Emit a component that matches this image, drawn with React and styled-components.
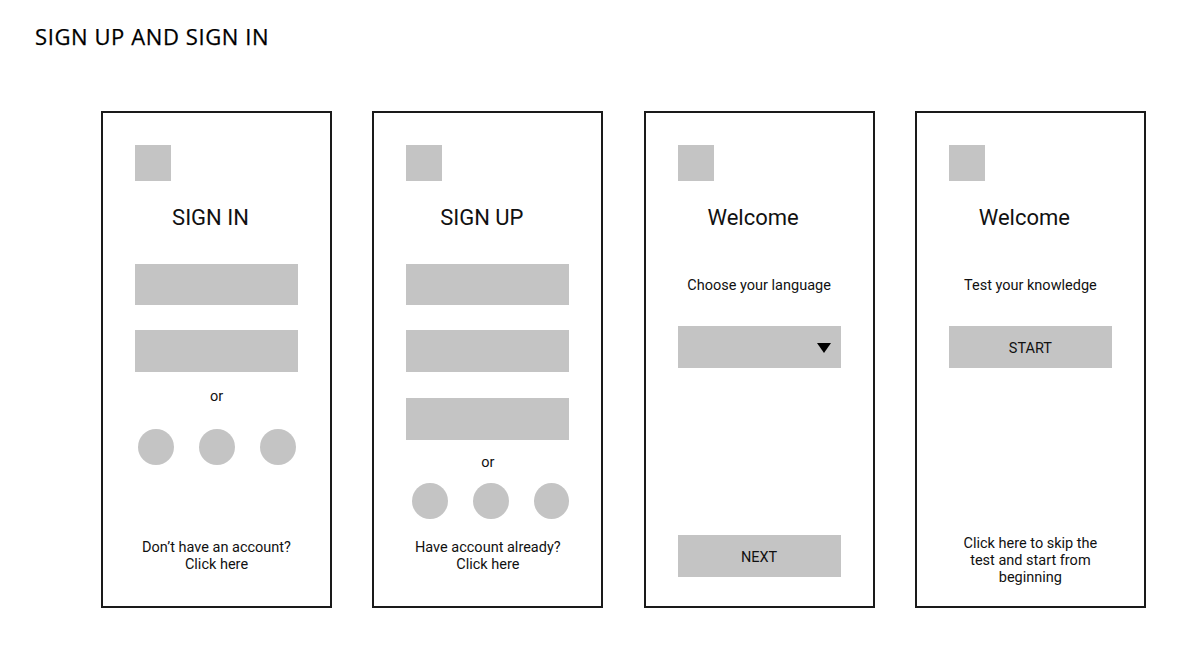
import styled, { createGlobalStyle } from "styled-components";

const GlobalStyle = createGlobalStyle`
  body {
    margin: 0;
    background: #ffffff;
    font-family: "Roboto", "Liberation Sans", sans-serif;
    color: #111111;
  }
`;

const Page = styled.div`
  width: 1200px;
  height: 656px;
  padding: 21px 0 0 35px;
  box-sizing: border-box;
`;

const Title = styled.h1`
  margin: 0;
  font-family: "Open Sans", "Liberation Sans", sans-serif;
  font-weight: 400;
  font-size: 22px;
  line-height: 30px;
  letter-spacing: 0.6px;
  color: #000;
  -webkit-text-stroke: 0.25px #000;
`;

const Board = styled.div`
  display: flex;
  gap: 40.3px;
  margin: 60px 0 0 66px;
`;

const Screen = styled.section`
  width: 231px;
  height: 497px;
  box-sizing: border-box;
  border: 2px solid #1a1a1a;
  display: flex;
  flex-direction: column;
  padding: 32px 32px ${(p) => p.$bottom || 33}px;
`;

const Logo = styled.div`
  width: 36px;
  height: 36px;
  background: #c4c4c4;
`;

const Heading = styled.h2`
  margin: 25px 12px 0 0;
  font-weight: 400;
  font-size: 22px;
  line-height: 24px;
  text-align: center;
  color: #111;
`;

const Field = styled.div`
  height: ${(p) => p.$h || 41}px;
  margin-top: ${(p) => p.$top}px;
  background: #c4c4c4;
  position: relative;
`;

const Caption = styled.p`
  margin: ${(p) => p.$top}px 0 0;
  font-size: 14.5px;
  line-height: 17px;
  text-align: center;
  color: #111;
`;

const Socials = styled.div`
  display: flex;
  gap: 25px;
  padding-left: ${(p) => p.$offset}px;
  margin-top: ${(p) => p.$top}px;
`;

const Circle = styled.div`
  width: 36px;
  height: 36px;
  border-radius: 50%;
  background: #c4c4c4;
`;

const Footer = styled.p`
  margin: auto 0 0;
  font-size: 14.5px;
  line-height: 17px;
  text-align: center;
  color: #111;
`;

const Button = styled.div`
  height: 42px;
  margin-top: ${(p) => (p.$top === undefined ? 0 : `${p.$top}px`)};
  background: #c4c4c4;
  display: flex;
  align-items: center;
  justify-content: center;
  padding-top: 2px;
  box-sizing: border-box;
  font-size: 14.5px;
  color: #111;
`;

const BottomButton = styled(Button)`
  margin-top: auto;
`;

const Caret = styled.svg`
  position: absolute;
  right: 10px;
  top: 17px;
`;

function SocialRow({ top, offset }) {
  return (
    <Socials $top={top} $offset={offset}>
      <Circle />
      <Circle />
      <Circle />
    </Socials>
  );
}

export default function App() {
  return (
    <>
      <GlobalStyle />
      <Page>
        <Title>SIGN UP AND SIGN IN</Title>
        <Board>
          <Screen>
            <Logo />
            <Heading>SIGN IN</Heading>
            <Field $top={34} />
            <Field $top={25} $h={42} />
            <Caption $top={16}>or</Caption>
            <SocialRow top={24} offset={3} />
            <Footer>
              Don’t have an account?
              <br />
              Click here
            </Footer>
          </Screen>

          <Screen>
            <Logo />
            <Heading>SIGN UP</Heading>
            <Field $top={34} />
            <Field $top={25} $h={42} />
            <Field $top={26} $h={42} />
            <Caption $top={14}>or</Caption>
            <SocialRow top={12} offset={6} />
            <Footer>
              Have account already?
              <br />
              Click here
            </Footer>
          </Screen>

          <Screen $bottom={29}>
            <Logo />
            <Heading>Welcome</Heading>
            <Caption $top={47}>Choose your language</Caption>
            <Field $top={32} $h={42}>
              <Caret width="14" height="10" viewBox="0 0 14 10">
                <polygon points="0,0 14,0 7,10" fill="#000" />
              </Caret>
            </Field>
            <BottomButton>NEXT</BottomButton>
          </Screen>

          <Screen $bottom={20}>
            <Logo />
            <Heading>Welcome</Heading>
            <Caption $top={47}>Test your knowledge</Caption>
            <Button $top={32}>START</Button>
            <Footer>
              Click here to skip the
              <br />
              test and start from
              <br />
              beginning
            </Footer>
          </Screen>
        </Board>
      </Page>
    </>
  );
}
